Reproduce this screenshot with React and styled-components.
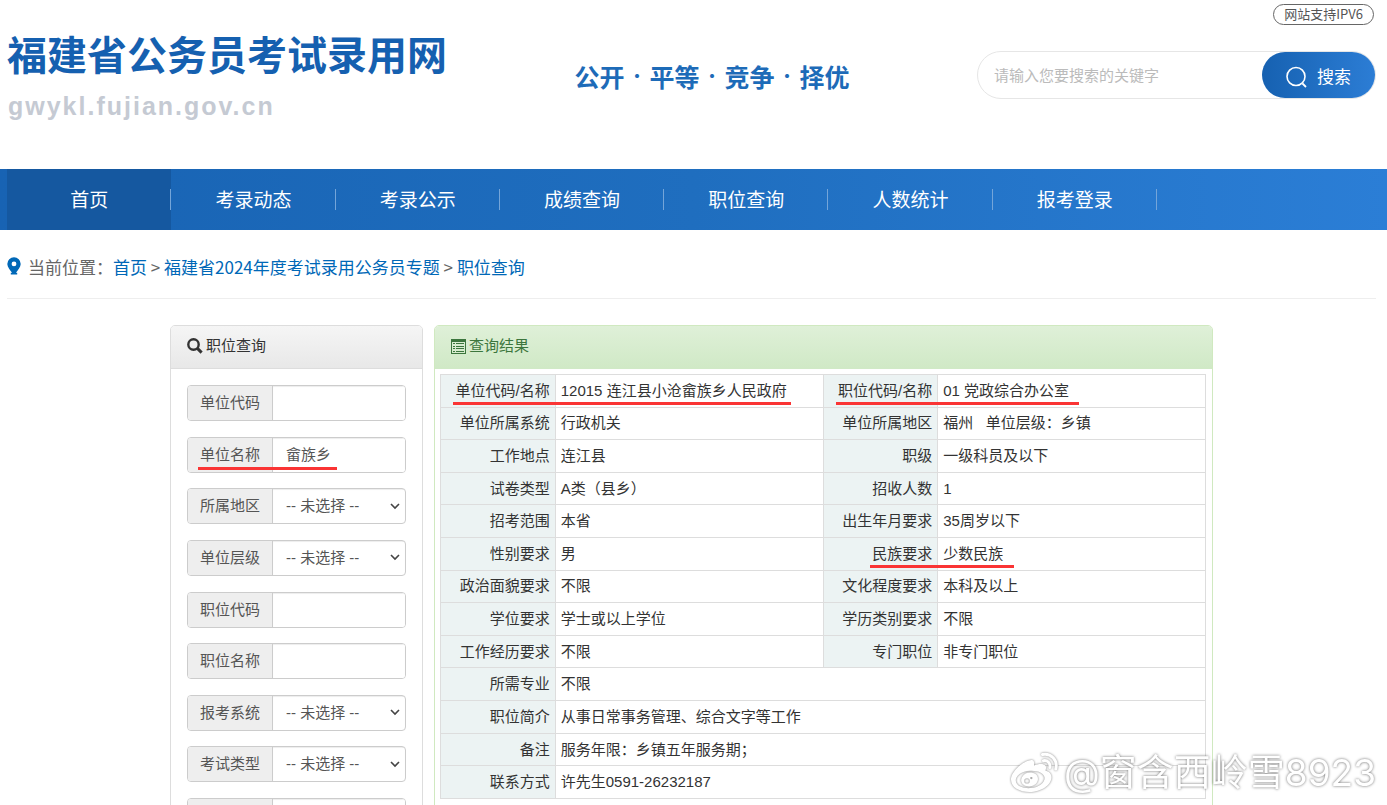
import React from "react";
import styled, { createGlobalStyle } from "styled-components";

const GlobalStyle = createGlobalStyle`
  * {
    box-sizing: border-box;
  }

  body {
    margin: 0;
    background: #fff;
    color: #333;
    font-family: "Noto Sans CJK SC", sans-serif;
    font-size: 15px;
  }

  a {
    text-decoration: none;
  }
`;

const Page = styled.div`
  height: 100vh;
  overflow: hidden;
`;

const Header = styled.header`
  display: flex;
  justify-content: space-between;
  height: 169px;
  padding: 0 11px 0 7px;
`;

const Brand = styled.div`
  padding-top: 29px;
`;

const SiteName = styled.h1`
  margin: 0;
  font-size: 40px;
  line-height: 48px;
  font-weight: bold;
  color: #1560b0;
`;

const SiteUrl = styled.div`
  margin-top: 13px;
  padding-left: 1px;
  font-family: "Liberation Sans", Arial, sans-serif;
  font-size: 25px;
  line-height: 32px;
  font-weight: bold;
  letter-spacing: 2px;
  color: #c5cad3;
`;

const Slogan = styled.div`
  display: flex;
  padding-top: 58px;
  font-size: 25px;
  line-height: 36px;
  font-weight: bold;
  color: #1d6bb8;
`;

const Dot = styled.span`
  width: 25px;
  font-size: 19px;
  font-weight: normal;
  text-align: center;
`;

const HeaderRight = styled.div`
  display: flex;
  flex-direction: column;
  align-items: flex-end;
  width: 399px;
  padding-top: 4px;
`;

const Badge = styled.a`
  height: 21px;
  margin-right: 2px;
  padding: 0 10px;
  border: 1px solid #666;
  border-radius: 11px;
  font-size: 13px;
  line-height: 18px;
  color: #555;
`;

const SearchForm = styled.form`
  display: flex;
  width: 100%;
  height: 48px;
  margin-top: 26px;
  border: 1px solid #e6e6e6;
  border-radius: 24px;
`;

const SearchInput = styled.input`
  flex: 1;
  min-width: 0;
  padding: 0 16px 2px;
  border: 0;
  outline: 0;
  background: transparent;
  font-family: inherit;
  font-size: 15px;

  &::placeholder {
    color: #bbb;
  }
`;

const SearchButton = styled.button`
  display: flex;
  align-items: center;
  justify-content: center;
  gap: 9px;
  width: 113px;
  padding: 3px 0 0;
  border: 0;
  border-radius: 24px;
  background: linear-gradient(90deg, #1661b1, #2c7dd5);
  color: #fff;
  font-family: inherit;
  font-size: 17px;
  line-height: 24px;

  span {
    padding-bottom: 2px;
  }
`;

const Nav = styled.nav`
  display: flex;
  height: 61px;
  padding: 0 11px 0 7px;
  background: linear-gradient(90deg, #1863b3, #1f6ebf 50%, #2b7ed6);
`;

const NavLink = styled.a`
  display: flex;
  flex: 0 0 12%;
  align-items: center;
  justify-content: center;
  background: ${(props) => (props.$active ? "#1558a0" : "transparent")};
  color: #fff;
  font-size: 19px;

  &::before {
    content: "";
    width: 1px;
  }

  span {
    flex: 1;
    padding-bottom: 3px;
    text-align: center;
  }

  &::after {
    content: "";
    width: 1px;
    height: 21px;
    background: #74a5d9;
  }
`;

const Content = styled.main`
  padding: 0 11px 0 7px;
`;

const Breadcrumb = styled.div`
  display: flex;
  align-items: center;
  height: 69px;
  padding-top: 4px;
  border-bottom: 1px solid #eee;
  color: #666;
  font-size: 17px;
  white-space: pre;

  svg {
    margin-right: 7px;
  }

  a {
    color: #0068b7;
  }
`;

const Columns = styled.div`
  display: grid;
  grid-template-columns: 253px 1fr;
  gap: 11px;
  max-width: 1043px;
  margin: 26px auto 0;
  font-family: "Liberation Sans", "Noto Sans CJK SC", sans-serif;
`;

const Panel = styled.section`
  border: 1px solid ${(props) => (props.$green ? "#d0e9c0" : "#ddd")};
  border-radius: 5px;
`;

const PanelTitle = styled.h2`
  display: flex;
  align-items: center;
  gap: 3px;
  height: 43px;
  margin: 0;
  padding: 0 16px 2px;
  border-bottom: 1px solid ${(props) => (props.$green ? "#d0e9c6" : "#ddd")};
  border-radius: 4px 4px 0 0;
  background: ${(props) =>
    props.$green
      ? "linear-gradient(#dff0d8, #d0e9c6)"
      : "linear-gradient(#f5f5f5, #e8e8e8)"};
  color: ${(props) => (props.$green ? "#3c763d" : "#333")};
  font-size: 15px;
  font-weight: normal;
  line-height: 22px;

  span {
    padding-bottom: 1px;
  }
`;

const FilterForm = styled.form`
  display: flex;
  flex-direction: column;
  justify-content: space-between;
  height: 482px;
  padding: 16px 16px 17px;
`;

const Field = styled.div`
  position: relative;
  display: flex;
  height: 36px;
  border: 1px solid #ccc;
  border-radius: 4px;
  overflow: hidden;
`;

const FieldLabel = styled.label`
  flex: 0 0 85px;
  background: #eee;
  border-right: 1px solid #ccc;
  color: #555;
  line-height: 33px;
  text-align: center;
`;

const FieldInput = styled.input`
  flex: 1;
  min-width: 0;
  padding: 0 13px 3px;
  border: 0;
  box-shadow: inset 0 1px 1px rgba(0, 0, 0, 0.075);
  background: #fff;
  color: #555;
  font-family: inherit;
  font-size: 15px;
`;

const SelectBox = styled.div`
  display: grid;
  flex: 1;
  align-items: center;
  box-shadow: inset 0 1px 1px rgba(0, 0, 0, 0.075);

  select,
  svg {
    grid-area: 1 / 1;
  }

  svg {
    justify-self: end;
    margin-right: 5px;
    pointer-events: none;
  }
`;

const FieldSelect = styled.select`
  appearance: none;
  width: 100%;
  height: 100%;
  padding: 0 13px 1px;
  border: 0;
  background: transparent;
  color: #555;
  font-family: inherit;
  font-size: 15px;
`;

const ResultBody = styled.div`
  padding: 5px 6px 15px 5px;
`;

const ResultTable = styled.table`
  width: 100%;
  height: 425px;
  border-collapse: collapse;
  table-layout: fixed;
`;

const HeadCell = styled.th`
  position: relative;
  width: 15%;
  padding: 0 5px;
  border: 1px solid #ddd;
  background: #ecf3f3;
  font-weight: normal;
  line-height: 22px;
  text-align: right;
  white-space: nowrap;
`;

const Cell = styled.td`
  padding: 0 5px;
  border: 1px solid #ddd;
  line-height: 22px;
  white-space: pre;
`;

// red pen stroke drawn over a label and its value
const Mark = styled.i`
  position: absolute;
  z-index: 1;
  bottom: 2px;
  left: ${(props) => props.$left}px;
  width: ${(props) => props.$width}px;
  height: 3px;
  background: #fa3434;
`;

const Watermark = styled.div`
  position: fixed;
  right: 11px;
  bottom: 5px;
  display: flex;
  align-items: center;
  gap: 5px;
  color: #fff;
  font-family: Inter, "Noto Sans CJK SC", sans-serif;
  font-size: 37px;
  line-height: 54px;
  text-shadow: 0 0 3px rgba(0, 0, 0, 0.6);
  pointer-events: none;

  svg {
    filter: drop-shadow(0 0 1px rgba(0, 0, 0, 0.5));
  }
`;

const PinIcon = () => (
  <svg width="14" height="18" viewBox="0 0 14 18">
    <path
      fill="#0068b7"
      fillRule="evenodd"
      d="M7 .3a6.700 6.700 0 0 1 6.700 6.700c0 3-2.800 6-4.800 8.800h1.300v1.700H3.800v-1.700h1.300C3.100 13 .3 10 .3 7A6.700 6.700 0 0 1 7 .3zM7 4.500a2.400 2.400 0 1 0 0 4.800 2.400 2.400 0 0 0 0-4.800z"
    />
  </svg>
);

const LensIcon = () => (
  <svg width="22" height="22" viewBox="0 0 22 22" fill="none" stroke="#fff">
    <circle cx="10" cy="10.500" r="9" strokeWidth="1.600" />
    <path d="M16.500 17.500l3.500 3.500" strokeWidth="1.800" />
  </svg>
);

const SearchIcon = () => (
  <svg width="16" height="16" viewBox="0 0 16 16" fill="none" stroke="#333">
    <circle cx="6.500" cy="6.500" r="5.200" strokeWidth="2.400" />
    <path d="M10.400 10.400l4.200 4.200" strokeWidth="3" />
  </svg>
);

const ListIcon = () => (
  <svg width="15" height="15" viewBox="0 0 15 15" fill="#3c763d">
    <path fillRule="evenodd" d="M0 0h15v15H0zM1 3v11h13V3z" />
    <path d="M2 4h2v1H2zM5 4h8v1H5zM2 7h2v1H2zM5 7h8v1H5zM2 9h2v1H2zM5 9h8v1H5zM2 12h2v1H2zM5 12h8v1H5z" />
  </svg>
);

const ChevronIcon = () => (
  <svg width="10" height="7" viewBox="0 0 10 7" fill="none">
    <path d="M1 1l4 4 4-4" stroke="#444" strokeWidth="1.600" />
  </svg>
);

const WeiboIcon = () => (
  <svg width="49" height="42" viewBox="0 0 49 42">
    <path
      fill="#fff"
      fillRule="evenodd"
      d="M19 8.500C22.500 7 25 8.500 24 13.500c4-1.600 9.500-2.300 11.500.2 1 1.400.6 3-.1 4.800 3.200 1 6.100 3 6.100 6.700C41.500 32.500 31.500 40 19.500 40 9.500 40 1 35.300 1 27.500 1 20.500 11 10.500 19 8.500zM20 18.700c-8.500.5-14.500 5-14.200 10 .3 5 7 8 15 7.400 8.200-.6 14.200-5.400 13.800-10.300-.4-4.800-6.600-7.600-14.600-7.100z"
    />
    <path
      fill="#fff"
      fillRule="evenodd"
      d="M21.500 20.500c4.800.7 7.300 4 6.300 8-1.200 4.300-6.300 6.800-11.200 5.600-4.600-1.200-6.600-5-4.800-8.700 1.600-3.400 5.600-5.500 9.700-4.900zM17 26.300a2.800 2.600 0 1 0 0 5.200 2.800 2.600 0 0 0 0-5.200zM21.300 25a1.200 1.100 0 1 0 0 2.200 1.200 1.100 0 0 0 0-2.200z"
    />
    <path
      fill="none"
      stroke="#fff"
      strokeWidth="3"
      strokeLinecap="round"
      d="M32.500 2.500c8.500-1.600 15.500 5.500 13.300 14.500M33.500 8.700c4-.8 7.300 2.500 6.300 6.800"
    />
  </svg>
);

const navItems = [
  "首页",
  "考录动态",
  "考录公示",
  "成绩查询",
  "职位查询",
  "人数统计",
  "报考登录",
];

const fields = [
  { id: "unit-code", label: "单位代码" },
  { id: "unit-name", label: "单位名称", value: "畲族乡", mark: [10, 139] },
  { id: "area", label: "所属地区", select: true },
  { id: "unit-level", label: "单位层级", select: true },
  { id: "post-code", label: "职位代码" },
  { id: "post-name", label: "职位名称" },
  { id: "system", label: "报考系统", select: true },
  { id: "exam-type", label: "考试类型", select: true },
  { id: "other", label: "" },
];

// [label, value, underline as left and width]
const rows = [
  [
    ["单位代码/名称", "12015 连江县小沧畲族乡人民政府", [12, 338]],
    ["职位代码/名称", "01 党政综合办公室", [12, 243]],
  ],
  [
    ["单位所属系统", "行政机关"],
    ["单位所属地区", "福州   单位层级：乡镇"],
  ],
  [
    ["工作地点", "连江县"],
    ["职级", "一级科员及以下"],
  ],
  [
    ["试卷类型", "A类（县乡）"],
    ["招收人数", "1"],
  ],
  [
    ["招考范围", "本省"],
    ["出生年月要求", "35周岁以下"],
  ],
  [
    ["性别要求", "男"],
    ["民族要求", "少数民族", [46, 144]],
  ],
  [
    ["政治面貌要求", "不限"],
    ["文化程度要求", "本科及以上"],
  ],
  [
    ["学位要求", "学士或以上学位"],
    ["学历类别要求", "不限"],
  ],
  [
    ["工作经历要求", "不限"],
    ["专门职位", "非专门职位"],
  ],
  [["所需专业", "不限"]],
  [["职位简介", "从事日常事务管理、综合文字等工作"]],
  [["备注", "服务年限：乡镇五年服务期；"]],
  [["联系方式", "许先生0591-26232187"]],
];

const App = () => {
  return (
    <Page>
      <GlobalStyle />
      <Header>
        <Brand>
          <SiteName>福建省公务员考试录用网</SiteName>
          <SiteUrl>gwykl.fujian.gov.cn</SiteUrl>
        </Brand>
        <Slogan>
          <span>公开</span>
          <Dot>·</Dot>
          <span>平等</span>
          <Dot>·</Dot>
          <span>竞争</span>
          <Dot>·</Dot>
          <span>择优</span>
        </Slogan>
        <HeaderRight>
          <Badge href="#">网站支持IPV6</Badge>
          <SearchForm>
            <SearchInput
              aria-label="搜索"
              placeholder="请输入您要搜索的关键字"
            />
            <SearchButton type="button">
              <LensIcon />
              <span>搜索</span>
            </SearchButton>
          </SearchForm>
        </HeaderRight>
      </Header>

      <Nav>
        {navItems.map((item, i) => (
          <NavLink href="#" key={item} $active={i === 0}>
            <span>{item}</span>
          </NavLink>
        ))}
      </Nav>

      <Content>
        <Breadcrumb>
          <PinIcon />
          <span>当前位置：</span>
          <a href="#">首页</a>
          <span>{" > "}</span>
          <a href="#">福建省2024年度考试录用公务员专题</a>
          <span>{" > "}</span>
          <a href="#">职位查询</a>
        </Breadcrumb>

        <Columns>
          <Panel>
            <PanelTitle>
              <SearchIcon />
              <span>职位查询</span>
            </PanelTitle>
            <FilterForm>
              {fields.map((field) => (
                <Field key={field.id}>
                  <FieldLabel htmlFor={field.id}>{field.label}</FieldLabel>
                  {field.select ? (
                    <SelectBox>
                      <FieldSelect id={field.id}>
                        <option>-- 未选择 --</option>
                      </FieldSelect>
                      <ChevronIcon />
                    </SelectBox>
                  ) : (
                    <FieldInput id={field.id} defaultValue={field.value} />
                  )}
                  {field.mark && (
                    <Mark $left={field.mark[0]} $width={field.mark[1]} />
                  )}
                </Field>
              ))}
            </FilterForm>
          </Panel>

          <Panel $green>
            <PanelTitle $green>
              <ListIcon />
              <span>查询结果</span>
            </PanelTitle>
            <ResultBody>
              <ResultTable>
                <colgroup>
                  <col width="15%" />
                  <col width="35%" />
                  <col width="15%" />
                  <col width="35%" />
                </colgroup>
                <tbody>
                  {rows.map((row) => (
                    <tr key={row[0][0]}>
                      {row.map(([label, value, mark]) => (
                        <React.Fragment key={label}>
                          <HeadCell scope="row">
                            {label}
                            {mark && <Mark $left={mark[0]} $width={mark[1]} />}
                          </HeadCell>
                          <Cell colSpan={row.length === 1 ? 3 : 1}>{value}</Cell>
                        </React.Fragment>
                      ))}
                    </tr>
                  ))}
                </tbody>
              </ResultTable>
            </ResultBody>
          </Panel>
        </Columns>
      </Content>

      <Watermark>
        <WeiboIcon />
        @窗含西岭雪8923
      </Watermark>
    </Page>
  );
};

export default App;
